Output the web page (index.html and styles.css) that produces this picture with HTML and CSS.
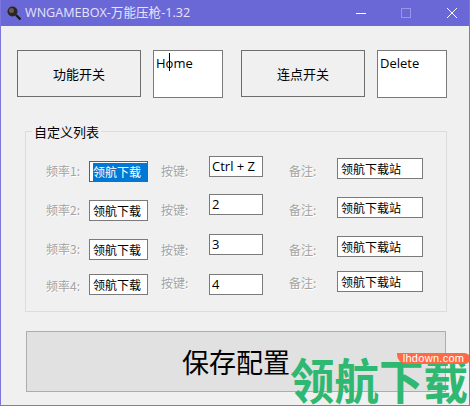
FILE: index.html
```html
<!DOCTYPE html>
<html lang="zh">
<head>
<meta charset="utf-8">
<title>WNGAMEBOX</title>
<link rel="stylesheet" href="styles.css">
</head>
<body>
<div class="window">
  <header class="titlebar">
    <svg class="app-icon" viewBox="0 0 16 16" width="16" height="16"><circle cx="6.5" cy="6.5" r="5" fill="#2b2622"/><circle cx="5.5" cy="5.5" r="2.5" fill="#6a5a4c"/><path d="M10 10l4.5 4.5" stroke="#1a1a1a" stroke-width="2.4"/></svg>
    <span class="title">WNGAMEBOX-万能压枪-1.32</span>
    <svg class="win-btn win-min" viewBox="0 0 12 12" width="12" height="12"><path d="M1 6.5h10" stroke="#fff"/></svg>
    <svg class="win-btn win-max" viewBox="0 0 12 12" width="12" height="12"><rect x="1.5" y="1.5" width="9" height="9" fill="none" stroke="#9a95e2"/></svg>
    <svg class="win-btn win-close" viewBox="0 0 12 12" width="12" height="12"><path d="M1 1l10 10M11 1L1 11" stroke="#fff"/></svg>
  </header>
  <main class="client">
    <div class="toprow">
      <button class="btn">功能开关</button>
      <div class="hotkey">H<span class="caret"></span>ome</div>
      <button class="btn btn-second">连点开关</button>
      <div class="hotkey hotkey-last">Delete</div>
    </div>
    <section class="group">
      <h2 class="legend">自定义列表</h2>
      <div class="stack s-l1"><span class="lab">频率1:</span><span class="lab">频率2:</span><span class="lab">频率3:</span><span class="lab">频率4:</span></div>
      <div class="stack s-i1"><div class="field w59"><span class="sel">领航下载</span></div><div class="field w59">领航下载</div><div class="field w59">领航下载</div><div class="field w59">领航下载</div></div>
      <div class="stack s-l2"><span class="lab">按键:</span><span class="lab">按键:</span><span class="lab">按键:</span><span class="lab">按键:</span></div>
      <div class="stack s-i2"><div class="field w54">Ctrl + Z</div><div class="field w54">2</div><div class="field w54">3</div><div class="field w54">4</div></div>
      <div class="stack s-l3"><span class="lab">备注:</span><span class="lab">备注:</span><span class="lab">备注:</span><span class="lab">备注:</span></div>
      <div class="stack s-i3"><div class="field w86">领航下载站</div><div class="field w86">领航下载站</div><div class="field w86">领航下载站</div><div class="field w86">领航下载站</div></div>
    </section>
    <button class="save">保存配置</button>
  </main>
  <div class="watermark"><span class="wm-text">领航下载</span><span class="wm-badge">lhdown.com</span></div>
</div>
</body>
</html>
```
FILE: styles.css
```css
* { box-sizing: border-box; }
html, body { margin: 0; padding: 0; }
body { width: 470px; height: 406px; overflow: hidden; font-family: "Noto Sans CJK SC", "Liberation Sans", sans-serif; font-size: 13px; color: #000; }
.window { position: relative; width: 470px; height: 406px; background: #f0f0f0; border: 1px solid #7b76dc; border-top: 0; overflow: hidden; }
.titlebar { height: 26px; background: #6a68d6; display: flex; align-items: center; padding-left: 5px; margin-right: -1px; margin-left: -1px; }
.app-icon { margin-left: 1px; flex: none; }
.title { margin-left: 3px; color: #e6e4fb; font-size: 12.6px; line-height: 26px; font-family: "Open Sans", "Noto Sans CJK SC", sans-serif; white-space: nowrap; }
.win-btn { flex: none; }
.win-min { margin-left: auto; }
.win-max { margin-left: 33px; }
.win-close { margin-left: 34px; margin-right: 12px; }
.client { padding: 24px 0 0 16px; }
.toprow { display: flex; align-items: flex-start; }
.btn { width: 124px; height: 47px; background: #f0f0f0; border: 1px solid #6d6d6d; font: inherit; font-size: 13px; padding: 0; color: #000; }
.btn-second { margin-left: 18px; }
.hotkey { position: relative; width: 70px; height: 48px; margin-left: 12px; background: #fff; border: 1px solid #7a7a7a; padding: 3px 2px 0; font-size: 13px; line-height: 18px; font-family: "Open Sans", sans-serif; }
.caret { position: absolute; left: 15px; top: 2px; width: 1px; height: 18px; background: #000; }
.group { position: relative; display: flex; width: 422px; height: 181px; margin: 33px 0 0 8px; border: 1px solid #dcdcdc; }
.legend { position: absolute; left: 6px; top: -7px; margin: 0; padding: 0 2px; background: #f0f0f0; font-size: 13px; font-weight: 400; line-height: 14px; white-space: nowrap; }
.stack { display: flex; flex-direction: column; flex: none; }
.lab { color: #a3a3a3; font-size: 12px; line-height: 16px; height: 16px; white-space: nowrap; text-shadow: 1px 1px 0 #fff; }
.field { height: 21px; background: #fff; border: 1px solid #7a7a7a; font-size: 12px; line-height: 19px; padding-left: 3px; white-space: nowrap; overflow: hidden; }
.w59 { width: 59px; }
.w54 { width: 54px; font-size: 13px; font-family: "Open Sans", sans-serif; padding-left: 2px; }
.w86 { width: 86px; }
.sel { display: block; background: #0078d7; color: #fff; height: 18px; margin-top: 1px; line-height: 18px; }
.s-i1 .field:first-child { border-color: #0078d7; }

.s-l1 { width: 43px; margin-left: 20px; padding-top: 31px; }
.s-l1 .lab:nth-child(2), .s-l1 .lab:nth-child(3) { margin-top: 23px; }
.s-l1 .lab:nth-child(4) { margin-top: 21px; }
.s-i1 { width: 72px; padding-top: 29px; }
.s-i1 .field + .field { margin-top: 18px; }
.s-i1 .field:last-child { margin-top: 14px; }
.s-l2 { width: 48px; padding-top: 31px; }
.s-l2 .lab:nth-child(2) { margin-top: 23px; }
.s-l2 .lab:nth-child(3) { margin-top: 24px; }
.s-l2 .lab:nth-child(4) { margin-top: 17px; }
.s-i2 { width: 80px; padding-top: 24px; }
.s-i2 .field:nth-child(2) { margin-top: 17px; }
.s-i2 .field:nth-child(3), .s-i2 .field:nth-child(4) { margin-top: 19px; }
.s-l3 { width: 48px; padding-top: 31px; }
.s-l3 .lab:nth-child(2) { margin-top: 23px; }
.s-l3 .lab:nth-child(3) { margin-top: 24px; }
.s-l3 .lab:nth-child(4) { margin-top: 17px; }
.s-i3 { padding-top: 26px; }
.s-i3 .field + .field { margin-top: 18px; }
.s-i3 .field:last-child { margin-top: 14px; }

.save { display: block; width: 420px; height: 61px; margin: 19px 0 0 9px; background: #e1e1e1; border: 1px solid #adadad; font: inherit; font-size: 27px; line-height: 1; color: #000; padding: 0; }
.watermark { position: absolute; left: 289px; top: 346px; width: 180px; height: 60px; }
.wm-text { position: absolute; left: 0; top: 7px; font-size: 44.5px; line-height: 50px; font-weight: 700; color: #2eb872; white-space: nowrap; transform: scaleY(1.08); }
.wm-badge { position: absolute; left: 107px; top: 7px; width: 73px; height: 11px; background: #ff6a45; color: #fff; font-family: "Liberation Sans", sans-serif; font-size: 11px; letter-spacing: 0.3px; line-height: 11px; text-align: center; border-radius: 0 6px 6px 10px; }
```
